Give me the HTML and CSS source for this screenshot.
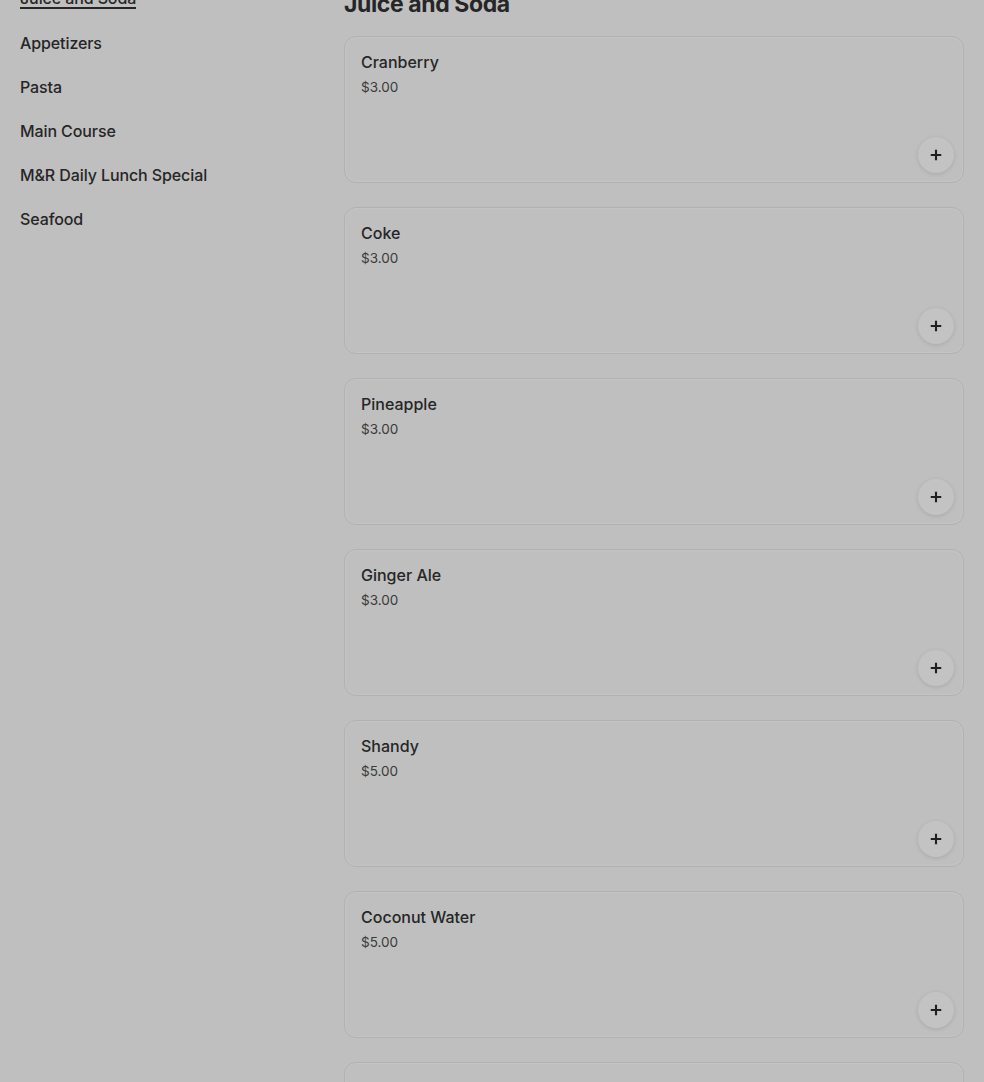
FILE: index.html
```html
<!DOCTYPE html>
<html lang="en">
<head>
    <meta charset="UTF-8">
    <title>Menu</title>
    <link rel="stylesheet" href="styles.css">
</head>
<body>
    <div class="page">
        <nav class="sidebar">
            <a class="nav-item active" href="#"><span>Juice and Soda</span></a>
            <a class="nav-item" href="#"><span>Appetizers</span></a>
            <a class="nav-item" href="#"><span>Pasta</span></a>
            <a class="nav-item" href="#"><span>Main Course</span></a>
            <a class="nav-item" href="#"><span>M&amp;R Daily Lunch Special</span></a>
            <a class="nav-item" href="#"><span>Seafood</span></a>
        </nav>

        <main class="menu">
            <h1>Juice and Soda</h1>
            <div class="item-list">
                <div class="item-card">
                    <div class="item-name">Cranberry</div>
                    <div class="item-price">$3.00</div>
                    <button class="add-btn" aria-label="Add">
                        <svg viewBox="0 0 16 16"><path d="M8 2v12M2 8h12" /></svg>
                    </button>
                </div>
                <div class="item-card">
                    <div class="item-name">Coke</div>
                    <div class="item-price">$3.00</div>
                    <button class="add-btn" aria-label="Add">
                        <svg viewBox="0 0 16 16"><path d="M8 2v12M2 8h12" /></svg>
                    </button>
                </div>
                <div class="item-card">
                    <div class="item-name">Pineapple</div>
                    <div class="item-price">$3.00</div>
                    <button class="add-btn" aria-label="Add">
                        <svg viewBox="0 0 16 16"><path d="M8 2v12M2 8h12" /></svg>
                    </button>
                </div>
                <div class="item-card">
                    <div class="item-name">Ginger Ale</div>
                    <div class="item-price">$3.00</div>
                    <button class="add-btn" aria-label="Add">
                        <svg viewBox="0 0 16 16"><path d="M8 2v12M2 8h12" /></svg>
                    </button>
                </div>
                <div class="item-card">
                    <div class="item-name">Shandy</div>
                    <div class="item-price">$5.00</div>
                    <button class="add-btn" aria-label="Add">
                        <svg viewBox="0 0 16 16"><path d="M8 2v12M2 8h12" /></svg>
                    </button>
                </div>
                <div class="item-card">
                    <div class="item-name">Coconut Water</div>
                    <div class="item-price">$5.00</div>
                    <button class="add-btn" aria-label="Add">
                        <svg viewBox="0 0 16 16"><path d="M8 2v12M2 8h12" /></svg>
                    </button>
                </div>
                <div class="item-card">
                    <div class="item-name">Malta</div>
                    <div class="item-price">$3.00</div>
                    <button class="add-btn" aria-label="Add">
                        <svg viewBox="0 0 16 16"><path d="M8 2v12M2 8h12" /></svg>
                    </button>
                </div>
            </div>
        </main>
    </div>
</body>
</html>
```

FILE: styles.css
```css
:root {
    --clr-bg: #bfbfbf;
    --clr-text: #262626;
    --clr-text-light: #3a3a3a;
    --clr-border: #b1b1b1;
    --radius: 12px;
}

* {
    margin: 0;
    padding: 0;
    box-sizing: border-box;
}

html,
body {
    background: var(--clr-bg);
    overflow: hidden;
}

body {
    font-family: Inter, 'Noto Sans', sans-serif;
    color: var(--clr-text);
    height: 1082px;
}

/* page is scrolled down a little */
.page {
    display: grid;
    grid-template-columns: 324px 620px;
    padding: 0 20px;
    margin-top: -23px;
}

.sidebar {
    display: flex;
    flex-direction: column;
}

.nav-item {
    height: 44px;
    display: flex;
    align-items: center;
    color: var(--clr-text);
    text-decoration: none;
    font-size: 16px;
    font-weight: 500;
    line-height: 18px;
    letter-spacing: -0.1px;
}

.nav-item.active span {
    border-bottom: 2px solid var(--clr-text);
}

.menu {
    padding-top: 11px;
}

h1 {
    font-size: 23px;
    line-height: 32px;
    font-weight: 700;
    letter-spacing: -0.4px;
    margin-bottom: 16px;
}

.item-list {
    display: flex;
    flex-direction: column;
    gap: 24px;
}

.item-card {
    height: 147px;
    border: 1px solid var(--clr-border);
    border-radius: var(--radius);
    box-shadow: inset 0 0 0 1px #c4c4c4;
    padding: 15px 9px 9px 16px;
    display: flex;
    flex-direction: column;
}

.item-name {
    font-size: 16px;
    font-weight: 500;
    line-height: 20px;
}

.item-price {
    font-size: 13.5px;
    line-height: 20px;
    margin-top: 5px;
    color: var(--clr-text-light);
}

.add-btn {
    margin-top: auto;
    align-self: flex-end;
    width: 36px;
    height: 36px;
    border: none;
    border-radius: 50%;
    background: #c3c3c3;
    box-shadow: 0 1px 4px rgba(0, 0, 0, 0.12);
    display: flex;
    align-items: center;
    justify-content: center;
    cursor: pointer;
}

.add-btn svg {
    width: 14px;
    height: 14px;
    stroke: #1f1f1f;
    stroke-width: 2.4;
    fill: none;
}
```
